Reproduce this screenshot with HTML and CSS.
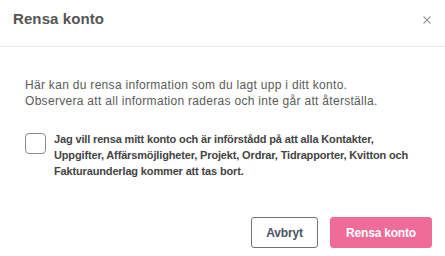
FILE: index.html
```html
<!DOCTYPE html>
<html lang="sv">
<head>
<meta charset="utf-8">
<title>Rensa konto</title>
<link rel="stylesheet" href="styles.css">
</head>
<body>
<div class="modal">
  <header class="modal-header">
    <h1 class="modal-title">Rensa konto</h1>
    <button class="close" aria-label="Stäng">
      <svg width="8" height="8" viewBox="0 0 8 8"><path d="M0.5 0.5 L7.5 7.5 M7.5 0.5 L0.5 7.5" stroke="#9a9a9a" stroke-width="1.1" fill="none"/></svg>
    </button>
  </header>
  <section class="modal-body">
    <p class="intro">Här kan du rensa information som du lagt upp i ditt konto.<br>Observera att all information raderas och inte går att återställa.</p>
    <label class="confirm">
      <span class="checkbox"></span>
      <span class="confirm-text">Jag vill rensa mitt konto och är införstådd på att alla Kontakter, Uppgifter, Affärsmöjligheter, Projekt, Ordrar, Tidrapporter, Kvitton och Fakturaunderlag kommer att tas bort.</span>
    </label>
  </section>
  <footer class="modal-footer">
    <button class="btn btn-cancel">Avbryt</button>
    <button class="btn btn-danger">Rensa konto</button>
  </footer>
</div>
</body>
</html>
```

FILE: styles.css
```css
html, body {
  margin: 0;
  padding: 0;
  background: #fff;
}
body {
  font-family: "Liberation Sans", Arial, sans-serif;
  color: #555;
}
.modal {
  width: 445px;
  height: 256px;
  display: flex;
  flex-direction: column;
}
.modal-header {
  border-bottom: 1px solid #e8e8e8;
  display: flex;
  justify-content: space-between;
  align-items: flex-start;
  padding: 10px 14px 0 13px;
  height: 36px;
}
.modal-title {
  margin: 0;
  font-size: 15px;
  line-height: 18px;
  font-weight: 700;
  color: #555;
  letter-spacing: 0.1px;
}
.close {
  border: 0;
  background: none;
  padding: 0;
  margin-top: 6px;
  width: 8px;
  height: 8px;
  display: flex;
  cursor: pointer;
}
.modal-body {
  padding: 30px 25px 0 25px;
}
.intro {
  margin: 0;
  font-size: 12px;
  line-height: 16px;
  letter-spacing: 0.3px;
  color: #5a5a5a;
}
.confirm {
  display: flex;
  align-items: flex-start;
  margin-top: 22px;
}
.checkbox {
  flex: 0 0 auto;
  width: 19px;
  height: 19px;
  margin-top: 2px;
  border: 1px solid #8c8c8c;
  border-radius: 4px;
}
.confirm-text {
  margin-left: 8px;
  font-size: 11px;
  line-height: 16px;
  font-weight: 700;
  letter-spacing: -0.15px;
  color: #444;
}
.modal-footer {
  margin-top: auto;
  padding: 0 13px 8px 0;
  display: flex;
  justify-content: flex-end;
  gap: 12px;
}
.btn {
  height: 31px;
  border-radius: 3px;
  font-family: "Liberation Sans", Arial, sans-serif;
  font-size: 12px;
  font-weight: 700;
  letter-spacing: -0.2px;
  padding: 0;
  cursor: pointer;
}
.btn-cancel {
  width: 67px;
  background: #fff;
  border: 1px solid #6b7280;
  color: #4b5563;
}
.btn-danger {
  width: 102px;
  background: #ef6c99;
  border: 1px solid #ef6c99;
  color: #fff;
}
```
